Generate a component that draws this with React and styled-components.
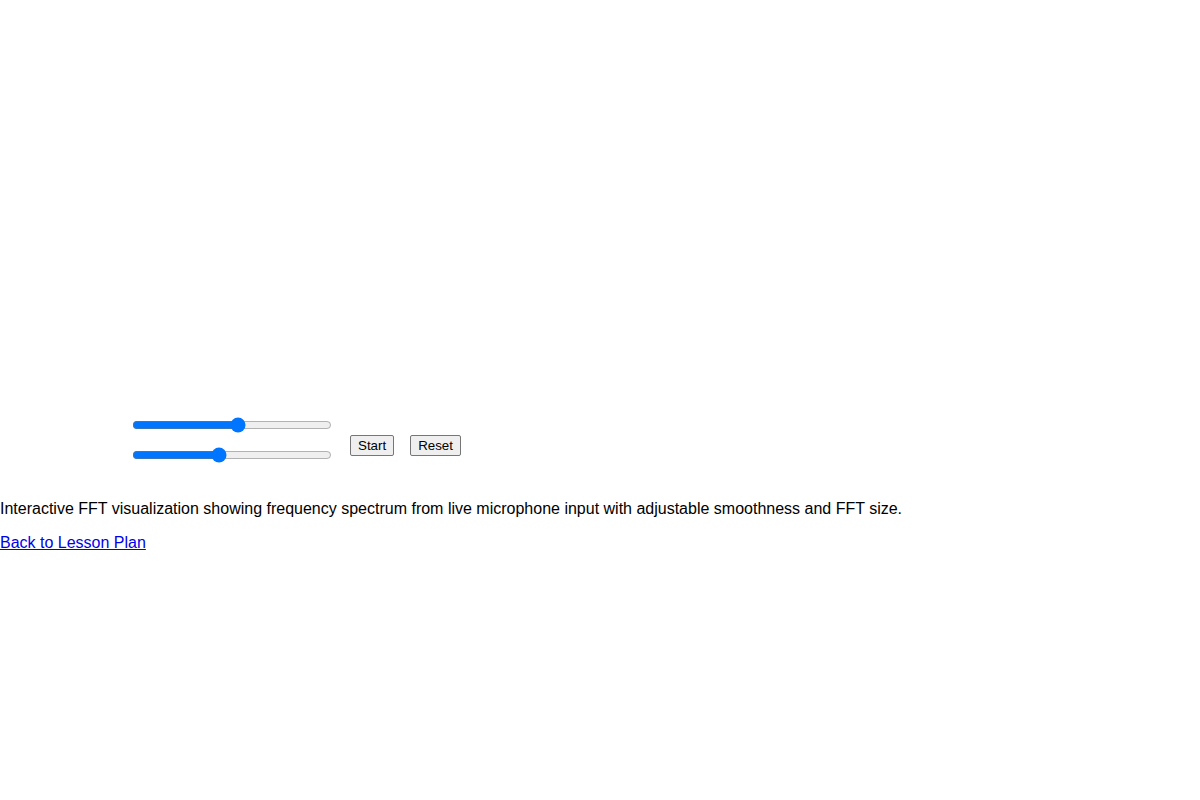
import React, { useState } from 'react';
import styled, { createGlobalStyle } from 'styled-components';

const GlobalStyle = createGlobalStyle`
  body {
    margin: 0;
    background: #ffffff;
    font-family: "Liberation Sans", Arial, sans-serif;
    font-size: 16px;
    color: #000;
  }
`;

// Empty area where the spectrum canvas sits
const CanvasArea = styled.div`
  width: 1200px;
  height: 405px;
  background: #ffffff;
`;

const Controls = styled.div`
  display: flex;
  align-items: center;
  gap: 16px;
  padding: 10px 0 19px 130px;
`;

const SliderColumn = styled.div`
  display: flex;
  flex-direction: column;
  gap: 10px;
`;

const Slider = styled.input`
  width: 200px;
  height: 16px;
  margin: 2px;
  accent-color: #0075ff;
`;

const ButtonRow = styled.div`
  display: flex;
  gap: 16px;
  margin-top: 11px;
`;

const Button = styled.button`
  font-family: "Liberation Sans", Arial, sans-serif;
  font-size: 13.33px;
  padding: 1px 7px;
  height: 21px;
  border: 1px solid #767676;
  border-radius: 2px;
  background: #efefef;
  color: #000;
`;

const Description = styled.p`
  margin: 16px 0;
  line-height: 18px;
`;

const BackLink = styled.a`
  color: #0000ee;
  text-decoration: underline;
`;

export default function App() {
  const [smoothing, setSmoothing] = useState(53);
  const [fftSize, setFftSize] = useState(43);

  return (
    <>
      <GlobalStyle />
      <CanvasArea />
      <Controls>
        <SliderColumn>
          <Slider
            type="range"
            min="0"
            max="100"
            value={smoothing}
            onChange={(e) => setSmoothing(Number(e.target.value))}
          />
          <Slider
            type="range"
            min="0"
            max="100"
            value={fftSize}
            onChange={(e) => setFftSize(Number(e.target.value))}
          />
        </SliderColumn>
        <ButtonRow>
          <Button>Start</Button>
          <Button>Reset</Button>
        </ButtonRow>
      </Controls>
      <Description>
        Interactive FFT visualization showing frequency spectrum from live microphone input with adjustable smoothness and FFT size.
      </Description>
      <Description>
        <BackLink href="#">Back to Lesson Plan</BackLink>
      </Description>
    </>
  );
}
